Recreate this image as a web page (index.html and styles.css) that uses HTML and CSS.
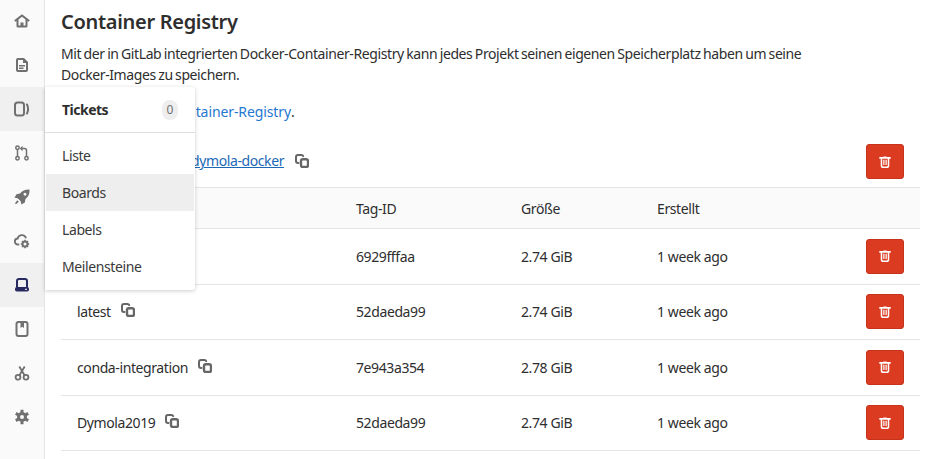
FILE: index.html
```html
<!DOCTYPE html>
<html lang="de">
<head>
<meta charset="utf-8">
<title>Container Registry</title>
<link rel="stylesheet" href="styles.css">
</head>
<body>
<svg class="sprite" aria-hidden="true">
  <symbol id="copy" viewBox="0 0 14 14">
    <path fill="none" stroke="currentColor" stroke-width="2" stroke-linecap="round" d="M3.500 9H3A2 2 0 0 1 1 7V3A2 2 0 0 1 3 1H6.500A2 2 0 0 1 8.200 2.200"/>
    <rect x="6" y="5.300" width="7" height="7.700" rx="1.800" fill="none" stroke="currentColor" stroke-width="2.400"/>
  </symbol>
  <symbol id="trash" viewBox="0 0 14 14">
    <path fill="currentColor" fill-rule="evenodd" d="M4.500 1.300A1.500 1.500 0 0 1 6 .5h2a1.500 1.500 0 0 1 1.500.8H13a.8.800 0 0 1 0 1.800h-1V11a3 3 0 0 1-3 3H5a3 3 0 0 1-3-3V3.100H1a.8.800 0 0 1 0-1.800zM3.800 3.100V11A1.200 1.200 0 0 0 5 12.200h4a1.200 1.200 0 0 0 1.200-1.200V3.100zM5 4.500h1.400v6H5zm2.600 0H9v6H7.600z"/>
  </symbol>
</svg>

<nav class="rail">
  <a class="rail-item"><svg class="icon" viewBox="0 0 16 16"><path fill="currentColor" fill-rule="evenodd" d="M8 1.200 15.800 7.200 14.600 8.800 13.500 8V13a1.500 1.500 0 0 1-1.500 1.500H4A1.500 1.500 0 0 1 2.500 13V8L1.400 8.800.2 7.200zM4.500 6.500V12.500h2V9.500h3v3h2V6.500L8 3.800z"/></svg></a>
  <a class="rail-item"><svg class="icon" viewBox="0 0 16 16"><path fill="currentColor" fill-rule="evenodd" d="M4 1h6l4 4v8a2 2 0 0 1-2 2H4a2 2 0 0 1-2-2V3a2 2 0 0 1 2-2zm0 2v10h8V6H9V3zM5 8h6v1.500H5zm0 2.500h4.500V12H5z"/></svg></a>
  <a class="rail-item active-soft"><svg class="icon" viewBox="0 0 16 16"><rect x="1" y="1.500" width="9" height="13" rx="2.500" fill="none" stroke="currentColor" stroke-width="2"/><path fill="none" stroke="currentColor" stroke-width="2" stroke-linecap="round" d="M13 3.500c1.400 2.800 1.400 6.200 0 9"/></svg></a>
  <a class="rail-item"><svg class="icon" viewBox="0 0 16 16"><g fill="none" stroke="currentColor" stroke-width="1.500"><circle cx="3.500" cy="2.800" r="1.700"/><circle cx="3.500" cy="13.200" r="1.700"/><circle cx="12.500" cy="13.200" r="1.700"/><path d="M3.500 4.500v7M12.500 11.500V5.500a2 2 0 0 0-2-2H7.500"/></g><path fill="currentColor" d="M8.500.8v5.400L5.800 3.500z"/></svg></a>
  <a class="rail-item"><svg class="icon" viewBox="0 0 16 16"><path fill="currentColor" fill-rule="evenodd" d="M15.500.5c.3 4-1 7.200-4 9.500l-.7 3.500L7.300 15.500l-.6-3.200-3-3L.5 8.700l2-3.500L6 4.500C8.400 1.700 11.500.2 15.500.5zM11 3.700a1.500 1.500 0 1 0 .01 0zM3.300 11.200l1.500 1.500L2 15.300 1 14.300z"/></svg></a>
  <a class="rail-item"><svg class="icon" viewBox="0 0 16 16"><path fill="none" stroke="currentColor" stroke-width="1.800" stroke-linecap="round" d="M4.500 11.500H4A3 3 0 0 1 3.700 5.500 4.300 4.300 0 0 1 11.800 4.500"/><circle cx="11" cy="11" r="2.500" fill="none" stroke="currentColor" stroke-width="2"/><path stroke="currentColor" stroke-width="1.500" d="M11 6.800v8.400M6.800 11h8.400M8 8l6 6M14 8l-6 6"/><circle cx="11" cy="11" r="1.500" fill="#fafafa"/></svg></a>
  <a class="rail-item active"><svg class="icon" viewBox="0 0 16 16"><path fill="none" stroke="currentColor" stroke-width="2" d="M3 10.500V4a2 2 0 0 1 2-2h6a2 2 0 0 1 2 2v6.500"/><rect x="1" y="10" width="14" height="4.500" rx="1.800" fill="currentColor"/><path stroke="#fff" stroke-width="1" d="M11 12.300h2"/></svg></a>
  <a class="rail-item"><svg class="icon" viewBox="0 0 16 16"><rect x="2.500" y="1" width="11" height="14" rx="2" fill="none" stroke="currentColor" stroke-width="2"/><path fill="currentColor" d="M6.500 1h3.500v6L8.200 5.700 6.500 7z"/></svg></a>
  <a class="rail-item"><svg class="icon" viewBox="0 0 16 16"><circle cx="4" cy="12.300" r="2.400" fill="none" stroke="currentColor" stroke-width="1.800"/><circle cx="12" cy="12.300" r="2.400" fill="none" stroke="currentColor" stroke-width="1.800"/><path fill="none" stroke="currentColor" stroke-width="1.800" d="M5.300 10.500 10.700 1.500M10.700 10.500 5.300 1.500"/></svg></a>
  <a class="rail-item"><svg class="icon" viewBox="0 0 16 16"><circle cx="8" cy="8" r="3.500" fill="none" stroke="currentColor" stroke-width="3"/><path stroke="currentColor" stroke-width="3" d="M8 .8v3M8 12.200v3M1.800 4.400l2.600 1.500M11.600 10.100l2.600 1.500M1.800 11.600l2.600-1.500M11.600 5.900l2.600-1.500"/></svg></a>
</nav>

<main class="content">
  <h1 class="title">Container Registry</h1>
  <p class="lead">Mit der in GitLab integrierten Docker-Container-Registry kann jedes Projekt seinen eigenen Speicherplatz haben um seine Docker-Images zu speichern.</p>
  <p class="more"><a class="link">Container-Registry</a>.</p>
  <div class="path-row">
    <div class="path"><a class="path-link">dymola-docker</a><svg class="copy copy-path"><use href="#copy"/></svg></div>
    <button class="danger"><svg class="trash"><use href="#trash"/></svg></button>
  </div>
  <div class="table">
    <div class="row head"><span class="cell-name"></span><span>Tag-ID</span><span>Größe</span><span>Erstellt</span><span></span></div>
    <div class="row"><span class="cell-name"></span><span>6929fffaa</span><span>2.74 GiB</span><span>1 week ago</span><button class="danger"><svg class="trash"><use href="#trash"/></svg></button></div>
    <div class="row"><span class="cell-name">latest<svg class="copy"><use href="#copy"/></svg></span><span>52daeda99</span><span>2.74 GiB</span><span>1 week ago</span><button class="danger"><svg class="trash"><use href="#trash"/></svg></button></div>
    <div class="row"><span class="cell-name">conda-integration<svg class="copy"><use href="#copy"/></svg></span><span>7e943a354</span><span>2.78 GiB</span><span>1 week ago</span><button class="danger"><svg class="trash"><use href="#trash"/></svg></button></div>
    <div class="row"><span class="cell-name">Dymola2019<svg class="copy"><use href="#copy"/></svg></span><span>52daeda99</span><span>2.74 GiB</span><span>1 week ago</span><button class="danger"><svg class="trash"><use href="#trash"/></svg></button></div>
  </div>
</main>

<aside class="flyout">
  <div class="flyout-head"><strong>Tickets</strong><span class="badge">0</span></div>
  <ul class="flyout-list">
    <li>Liste</li>
    <li class="hover">Boards</li>
    <li>Labels</li>
    <li>Meilensteine</li>
  </ul>
</aside>
</body>
</html>
```
FILE: styles.css
```css
* { box-sizing: border-box; }
html, body { height: 100%; }
body {
  margin: 0;
  display: flex;
  overflow: hidden;
  background: #fff;
  color: #2e2e2e;
  font: 14px/21px "Noto Sans", "Open Sans", sans-serif;
}
.sprite { display: none; }

.rail {
  flex: 0 0 45px;
  height: 100%;
  background: #fafafa;
  border-right: 1px solid #e5e5e5;
}
.rail-item {
  display: flex;
  align-items: center;
  justify-content: center;
  height: 44px;
  color: #707070;
}
.rail-item:first-child { margin-top: -1px; }
.active-soft { background: #f0f0f0; }
.active { background: #f0f0f0; color: #292961; }
.icon { width: 16px; height: 16px; }

.content {
  flex: 1;
  min-width: 0;
  padding: 10px 10px 0 16px;
  letter-spacing: -0.4px;
}
.title {
  margin: 0 0 9px;
  font-size: 20px;
  line-height: 24px;
  font-weight: 600;
  letter-spacing: -0.3px;
  color: #2e2e2e;
}
.lead { margin: 0 0 16px; max-width: 760px; word-spacing: -0.8px; }
.more { margin: 0 0 22px; padding-left: 109px; }
.link { color: #1f78d1; letter-spacing: -0.1px; }
.path-row {
  display: flex;
  justify-content: space-between;
  align-items: center;
  height: 35px;
  padding-right: 16px;
  margin-bottom: 8px;
}
.path { display: flex; align-items: center; padding: 0 0 2px 130px; }
.path-link { color: #1b69b6; text-decoration: underline; }
.copy { width: 14px; height: 14px; margin: 0 0 3px 10px; color: #666; flex: none; }
.copy-path { margin: 0 0 0 11px; }

.danger {
  display: flex;
  align-items: center;
  justify-content: center;
  width: 38px;
  height: 35px;
  padding: 0;
  border: 1px solid #c7321a;
  border-radius: 3px;
  background: #db3b21;
  color: #fff;
}
.trash { width: 12px; height: 12px; }

.table { border-top: 1px solid #e5e5e5; }
.row {
  display: grid;
  grid-template-columns: 279px 165px 136px 209px 38px;
  align-items: center;
  height: 55.5px;
  padding-left: 16px;
  border-bottom: 1px solid #e5e5e5;
}
.head { height: 41px; background: #fafafa; }
.cell-name { display: flex; align-items: center; }

.flyout {
  position: absolute;
  left: 45px;
  top: 87px;
  width: 150px;
  height: 203px;
  background: #fff;
  border-radius: 0 3px 3px 0;
  box-shadow: 0 1px 4px rgba(0, 0, 0, 0.2);
}
.flyout-head {
  display: flex;
  justify-content: space-between;
  align-items: center;
  height: 46px;
  padding: 0 17px;
  border-bottom: 1px solid #dfdfdf;
  color: #2e2e2e;
}
.flyout-head strong { font-weight: 700; letter-spacing: -0.5px; }
.badge {
  width: 16px;
  height: 20px;
  border-radius: 8px;
  background: #eee;
  color: #707070;
  font-size: 12px;
  line-height: 20px;
  text-align: center;
}
.flyout-list { list-style: none; margin: 4px 0 0; padding: 0 1px; }
.flyout-list li {
  height: 37px;
  padding-left: 16px;
  line-height: 37px;
  color: #3a3a3a;
  letter-spacing: -0.4px;
}
.flyout-list .hover { background: #eee; }
```
